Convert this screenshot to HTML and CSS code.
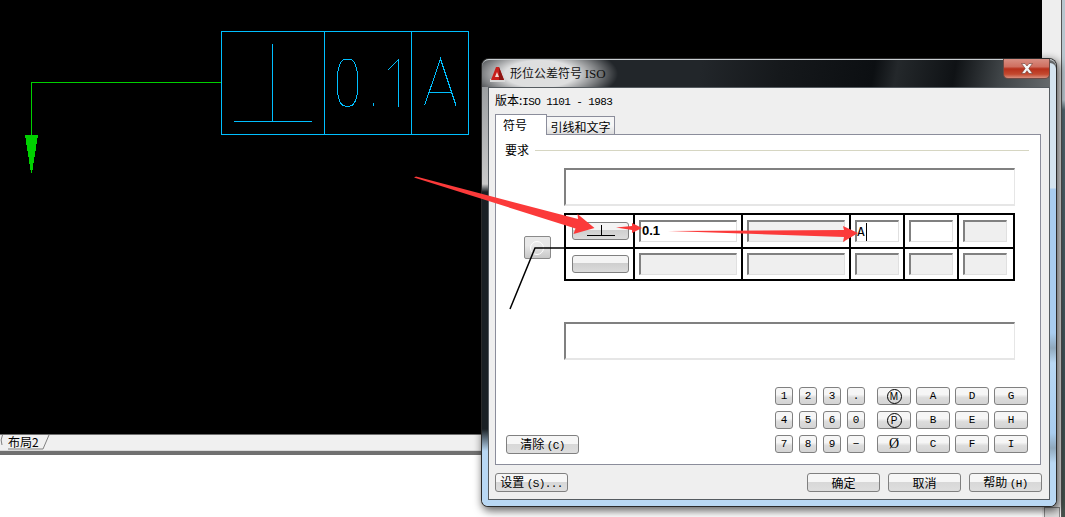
FILE: index.html
```html
<!DOCTYPE html>
<html lang="zh">
<head>
<meta charset="utf-8">
<title>形位公差符号 ISO</title>
<link rel="stylesheet" href="styles.css">
</head>
<body>
<div class="desktop">
  <main class="cad">
    <div class="viewport">
      <svg class="drawing" width="1042" height="434" viewBox="0 0 1042 434">
        <g fill="none" stroke="#00bfff" stroke-width="1" shape-rendering="crispEdges">
          <rect x="221.500" y="31.500" width="247" height="103"/>
          <path d="M324.500 31v103M411.500 31v103M272.500 44v77M234 121.500h78M429 92.500h22"/>
          <path d="M345 59.500c-5 0-8 10-8 23.500s3 23 8 23h5c5 0 8-10 8-23s-3-23.500-8-23.500z"/>
          <path d="M388 70l10.500-10.500v47M373.500 103v3"/>
          <path d="M424.500 105.500L440.500 59l15.500 46.500"/>
        </g>
        <path d="M221 82.500H31.500V135" fill="none" stroke="#00d000" stroke-width="1" shape-rendering="crispEdges"/>
        <path class="leader-head" d="M25 135h13l-6 38h-1z" shape-rendering="crispEdges"/>
      </svg>
      <div class="layout-tabs">
        <span class="layout-tab">布局2<svg class="tab-outline" width="50" height="15" viewBox="0 0 50 15"><path d="M2.500 0Q0 5 2 10M8 14H43L49 0" fill="none" stroke="#808080"/></svg></span>
      </div>
      <div class="status-line"></div>
    </div>
    <aside class="side-strip"><i class="strip-corner"></i></aside>
  </main>

  <section class="window">
    <header class="titlebar">
      <svg class="app-icon" width="16" height="16" viewBox="0 0 16 16">
        <rect x="0" y="13" width="15" height="3" fill="#d8d8d8"/>
        <path d="M1 14L6 1h3l5 13z" fill="#c8201c"/>
        <path d="M5 11l2-5 2 5z" fill="#f4d8d0"/>
        <path d="M9 1l5 13H9z" fill="#8c1512"/>
      </svg>
      <h1 class="title-text">形位公差符号 <span class="title-latin">ISO</span></h1>
      <button class="close-btn" type="button" aria-label="关闭">
        <svg width="12" height="11" viewBox="0 0 12 11">
          <path d="M0.500 0.500h3.500l2 2.500 2-2.500h3.500l-3.700 5 3.700 5h-3.500l-2-2.800-2 2.800H0.500l3.700-5z" fill="#f5f5f5" stroke="#6d3a30" stroke-width=".6"/>
        </svg>
      </button>
    </header>

    <div class="client">
      <p class="version">版本:<span class="mono">ISO 1101 - 1983</span></p>
      <div class="tabs">
        <div class="tab tab-active">符号</div>
        <div class="tab">引线和文字</div>
      </div>
      <div class="panel">
        <div class="group-head"><span>要求</span><i class="group-rule"></i></div>
        <div class="wide-field"></div>
        <div class="matrix-row">
          <div class="leader-col"><button class="leader-btn" type="button"><i class="ring"></i></button></div>
          <div class="matrix">
            <div class="cell"><button class="sym-btn" type="button"><svg width="36" height="14" viewBox="0 0 36 14"><path d="M4 11.500h28M18 1v11" stroke="#000" fill="none" shape-rendering="crispEdges"/></svg></button></div>
            <div class="cell"><div class="field live"><b>0.1</b></div></div>
            <div class="cell"><div class="field"></div></div>
            <div class="cell"><div class="field live"><span class="caret-text">A</span></div></div>
            <div class="cell"><div class="field live"></div></div>
            <div class="cell"><div class="field"></div></div>
            <div class="cell"><button class="sym-btn" type="button"></button></div>
            <div class="cell"><div class="field"></div></div>
            <div class="cell"><div class="field"></div></div>
            <div class="cell"><div class="field"></div></div>
            <div class="cell"><div class="field"></div></div>
            <div class="cell"><div class="field"></div></div>
          </div>
        </div>
        <div class="wide-field lower"></div>
        <div class="panel-foot">
          <button class="btn" type="button">清除 <span class="paren">(C)</span></button>
          <div class="keypad">
            <div class="digits">
              <button class="key" type="button">1</button><button class="key" type="button">2</button><button class="key" type="button">3</button><button class="key" type="button">.</button>
              <button class="key" type="button">4</button><button class="key" type="button">5</button><button class="key" type="button">6</button><button class="key" type="button">0</button>
              <button class="key" type="button">7</button><button class="key" type="button">8</button><button class="key" type="button">9</button><button class="key" type="button">−</button>
            </div>
            <div class="letters">
              <button class="key wide" type="button"><span class="circled">M</span></button><button class="key wide" type="button">A</button><button class="key wide" type="button">D</button><button class="key wide" type="button">G</button>
              <button class="key wide" type="button"><span class="circled">P</span></button><button class="key wide" type="button">B</button><button class="key wide" type="button">E</button><button class="key wide" type="button">H</button>
              <button class="key wide" type="button"><span class="phi">Ø</span></button><button class="key wide" type="button">C</button><button class="key wide" type="button">F</button><button class="key wide" type="button">I</button>
            </div>
          </div>
        </div>
      </div>
      <footer class="actions">
        <button class="btn" type="button">设置 <span class="paren">(S)...</span></button>
        <div class="actions-right">
          <button class="btn" type="button">确定</button>
          <button class="btn" type="button">取消</button>
          <button class="btn" type="button">帮助 <span class="paren">(H)</span></button>
        </div>
      </footer>
    </div>
  </section>

  <svg class="annotations" width="1065" height="517" viewBox="0 0 1065 517">
    <path d="M510 309L535 248H565" fill="none" stroke="#000" stroke-width="1.500"/>
    <path d="M414 177.500L416 176.500L578 219l-.5-5 17 14-21 6 2-5.500z" fill="#fb3a3a"/>
    <path d="M616 227.500L632 226v-3l10 5-10 5v-3z" fill="#fb3a3a"/>
    <path d="M668 231L844 230l-1-4 15 7-15 9 1-5z" fill="#fb3a3a"/>
  </svg>
</div>
</body>
</html>
```
FILE: styles.css
```css
* { box-sizing: border-box; }
html, body { margin: 0; padding: 0; }
body { background: #fff; overflow: hidden; }
.desktop {
  position: relative;
  width: 1065px;
  height: 517px;
  overflow: hidden;
  font-family: "Noto Sans CJK SC", "Liberation Sans", sans-serif;
  font-size: 12px;
  color: #000;
}
.cad { display: flex; height: 517px; }
.viewport { width: 1042px; display: flex; flex-direction: column; }
.drawing { display: block; background: #000; flex: none; }
.leader-head { fill: #00d000; }
.layout-tabs {
  height: 17px;
  background: #f0f0f0;
  border-top: 1px solid #6f6f6f;
  border-bottom: 1px solid #d8d8d8;
  flex: none;
}
.layout-tab {
  display: block;
  position: relative;
  width: 50px;
  height: 15px;
  line-height: 14px;
  padding-left: 8px;
  font-size: 12px;
}
.tab-outline { position: absolute; left: 0; top: 0; }
.status-line { height: 4px; background: #707070; flex: none; }
.side-strip {
  width: 23px;
  display: flex;
  flex-direction: column;
  justify-content: flex-end;
  background:
    linear-gradient(90deg, #eeeeee 0 19px, #555 19px 20px, transparent 20px),
    linear-gradient(#b8c6ce 0 100px, #51656e 110px, #3f5054 400px, #46524c 100%);
}
.strip-corner {
  display: block;
  width: 16px;
  height: 10px;
  margin-left: 2px;
  border: 1px solid #8a8a8a;
  border-bottom: 0;
  background: #dcdcdc;
}

.window {
  position: absolute;
  left: 482px;
  top: 59px;
  width: 574px;
  height: 447px;
  border-radius: 7px 7px 6px 6px;
  padding: 0 6px 6px;
  display: flex;
  flex-direction: column;
  background: linear-gradient(#8f9396 0, #c9c9c9 125px, #1a2024 133px, #1a2024 370px, #b9d8f4 392px);
  box-shadow: 0 0 0 1px #2a2a2a, 2px 3px 9px 2px rgba(0,0,0,.6);
}
.window::after {
  content: "";
  position: absolute;
  right: 0;
  top: 4px;
  bottom: 0;
  width: 6px;
  background: linear-gradient(#d4e4f0 0 125px, #a9cdf0 126px, #a9cdf0 270px, #8fa8bc 285px, #b9d8f4 300px, #a9cdf0 370px, #8fa8bc 385px, #b9d8f4 400px);
  border-radius: 0 6px 6px 0;
}
.titlebar {
  height: 28px;
  margin: 0 -6px;
  padding-left: 8px;
  display: flex;
  align-items: center;
  position: relative;
  flex: none;
  border-radius: 7px 7px 0 0;
  border-top: 1px solid #c9cfd2;
  background:
    radial-gradient(ellipse 78px 30px at 58px 14px, rgba(255,255,255,.85) 0 45%, rgba(255,255,255,.4) 75%, rgba(255,255,255,0) 100%),
    linear-gradient(100deg, #22262a 0 38%, #15181b 52%, #0c0f12 68%, #24282b 72%, #0f1215 82%, #3f4447 90%, #6a6e70 100%);
}
.app-icon { flex: none; }
.title-text {
  margin: 0 0 0 4px;
  font-size: 12px;
  font-weight: 400;
  color: #111;
  white-space: nowrap;
  line-height: 20px;
}
.title-latin { font-family: "Liberation Serif", serif; font-size: 13px; }
.close-btn {
  position: absolute;
  right: 6px;
  top: -1px;
  width: 47px;
  height: 20px;
  padding: 0;
  display: flex;
  align-items: center;
  justify-content: center;
  border: 1px solid #6e4a44;
  border-top: 0;
  border-radius: 0 0 5px 5px;
  background: linear-gradient(#d88f83 0, #cf6f60 40%, #b7301b 52%, #c4492f 80%, #d98e7c 100%);
  z-index: 2;
}

.client {
  flex: 1;
  display: flex;
  flex-direction: column;
  background: #efefef;
  border: 1px solid #555b60;
  padding: 3px 7px 7px 6px;
  position: relative;
  z-index: 1;
  min-height: 0;
}
.version { margin: 0; height: 22px; line-height: 18px; font-size: 12px; }
.mono { font-family: "Liberation Mono", monospace; font-size: 11px; letter-spacing: -.6px; }

.tabs { display: flex; align-items: flex-end; height: 21px; flex: none; position: relative; z-index: 1; }
.tab {
  width: 68px;
  height: 18px;
  line-height: 19px;
  text-align: center;
  border: 1px solid #8b8d9b;
  border-bottom: 0;
  border-left: 0;
  background: linear-gradient(#f6f6f6 0 50%, #dcdcdc 100%);
  font-size: 12px;
}
.tab-active {
  width: 52px;
  height: 21px;
  line-height: 19px;
  text-align: left;
  border-left: 1px solid #8b8d9b;
  border-right: 1px solid #8b8d9b;
  background: #fff;
  padding-left: 7px;
  margin-bottom: -1px;
}
.panel {
  height: 331px;
  flex: none;
  margin-right: 1px;
  background: #fff;
  border: 1px solid #8b8d9b;
  padding: 5px 25px 0 9px;
  display: flex;
  flex-direction: column;
}
.group-head { display: flex; align-items: center; height: 20px; flex: none; }
.group-head span { line-height: 20px; width: 30px; flex: none; }
.group-rule { flex: 1; height: 1px; background: #d6d6c2; margin-right: -14px; }

.wide-field {
  flex: none;
  height: 38px;
  margin: 8px 0 0 59px;
  background: #fff;
  border: 2px solid #e6e6e6;
  border-top-color: #808080;
  border-left-color: #808080;
  border-right-width: 1px;
}
.wide-field.lower { margin-top: 41px; }

.matrix-row { display: flex; margin-top: 7px; flex: none; }
.leader-col { width: 59px; flex: none; padding: 23px 0 0 19px; }
.leader-btn {
  display: flex;
  align-items: center;
  justify-content: center;
  width: 27px;
  height: 23px;
  padding: 0;
  border: 1px solid #8a8a8a;
  border-radius: 2px;
  background: linear-gradient(#e8e8e8 0 40%, #c8c8c8 100%);
}
.ring { width: 14px; height: 14px; border: 1px solid #fff; border-radius: 50%; margin-left: -1px; }

.matrix {
  display: grid;
  width: 451px;
  grid-template-columns: 69px 108px 108px 54px 54px 56px;
  grid-template-rows: 34px 32px;
  border-top: 2px solid #000;
  border-left: 2px solid #000;
  background: #fff;
}
.cell {
  border-right: 2px solid #000;
  border-bottom: 2px solid #000;
  display: flex;
  align-items: center;
  justify-content: center;
  min-width: 0;
  padding: 0 4px;
}
.cell:nth-child(6n+1) { padding-left: 6px; }
.cell:nth-child(6n) { padding-right: 6px; }
.field {
  width: 100%;
  height: 22px;
  background: #efefef;
  border: 1px solid #e0e0e0;
  border-top: 2px solid #808080;
  border-left: 2px solid #808080;
  overflow: hidden;
}
.field.live { background: #fff; }
.field b {
  display: block;
  font: 700 13px/18px "Liberation Sans", sans-serif;
  padding-left: 1px;
}
.caret-text {
  display: inline-block;
  font: 400 13px/17px "DejaVu Sans Mono", monospace;
  padding-right: 1px;
  border-right: 1px solid #000;
  height: 18px;
}
.sym-btn {
  display: flex;
  align-items: center;
  justify-content: center;
  width: 100%;
  height: 18px;
  padding: 0;
  border: 1px solid #808080;
  border-radius: 3px;
  background: linear-gradient(#f4f4f4 0 45%, #cfcfcf 46%, #dcdcdc 100%);
}

.panel-foot {
  flex: 1;
  display: flex;
  align-items: flex-end;
  justify-content: space-between;
  padding: 0 0 10px 1px;
  margin-right: -13px;
}
.btn {
  width: 73px;
  height: 19px;
  padding: 0;
  border: 1px solid #808080;
  border-radius: 3px;
  background: linear-gradient(#f6f6f6 0 45%, #d8d8d8 50%, #dedede 100%);
  font: 12px/16px "Noto Sans CJK SC", sans-serif;
  color: #000;
  white-space: nowrap;
}
.paren { font-family: "Liberation Mono", monospace; font-size: 11px; letter-spacing: -.6px; }
.keypad { display: flex; gap: 12px; margin-bottom: 1px; }
.digits { display: grid; grid-template-columns: repeat(4, 18px); grid-auto-rows: 18px; column-gap: 6px; row-gap: 6px; }
.letters { display: grid; grid-template-columns: repeat(4, 34px); grid-auto-rows: 18px; column-gap: 5px; row-gap: 6px; }
.key {
  padding: 0;
  border: 1px solid #808080;
  border-radius: 3px;
  background: linear-gradient(#f6f6f6 0 40%, #dcdcdc 60%, #d4d4d4 100%);
  font: 11px/14px "Liberation Mono", monospace;
  color: #000;
  display: flex;
  align-items: center;
  justify-content: center;
}
.circled {
  display: block;
  width: 15px;
  height: 15px;
  border: 1px solid #000;
  border-radius: 50%;
  font: 10px/13px "Liberation Sans", sans-serif;
  text-align: center;
}
.phi { font: 14px/14px "Liberation Serif", serif; }

.actions {
  flex: 1;
  display: flex;
  align-items: flex-end;
  justify-content: space-between;
}
.actions-right { display: flex; gap: 8px; }

.annotations { position: absolute; left: 0; top: 0; pointer-events: none; z-index: 3; }
```
